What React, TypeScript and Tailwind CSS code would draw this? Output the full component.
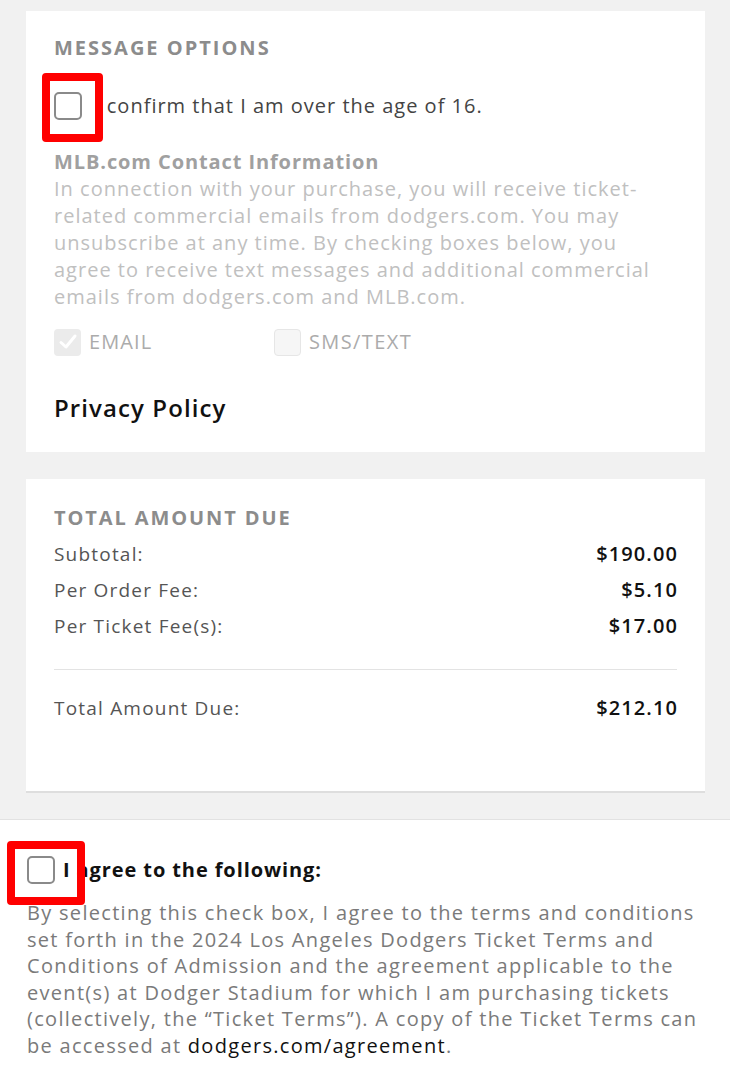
import React from "react";

const font = { fontFamily: "'Open Sans', 'Noto Sans', sans-serif" };

function Box() {
  return <div className="w-[28px] h-[28px] rounded-[5px] border-2 border-[#8a8a8a] bg-white" />;
}

export default function App() {
  return (
    <div className="w-[730px] min-h-[1076px] bg-[#f1f1f1] font-['Open_Sans',sans-serif]" style={font}>
      <div className="pt-[11px]">
        {/* Card 1 */}
        <div className="ml-[26px] w-[679px] bg-white px-[28px] pt-[25px] pb-[29px]">
          <div className="text-[20px] leading-[24px] font-bold text-[#8c8c8c] tracking-[2px]">MESSAGE OPTIONS</div>
          <div className="mt-[28px] h-[36px] flex items-center">
            <div className="relative">
              <Box />
              <div className="absolute left-[-12px] top-[-19px] w-[61px] h-[69px] border-[8px] border-[#ff0000] rounded-[4px]" />
            </div>
            <div className="ml-[12px] text-[20px] text-[#444] leading-[24px] tracking-[1px]">I confirm that I am over the age of 16.</div>
          </div>
          <div className="mt-[24px] text-[20px] leading-[27px] font-bold text-[#a0a0a0] tracking-[0.9px]">MLB.com Contact Information</div>
          <div className="text-[20px] leading-[27px] text-[#c0c0c0] tracking-[1px] whitespace-nowrap">
            In connection with your purchase, you will receive ticket-<br />
            related commercial emails from dodgers.com. You may<br />
            unsubscribe at any time. By checking boxes below, you<br />
            agree to receive text messages and additional commercial<br />
            emails from dodgers.com and MLB.com.
          </div>
          <div className="mt-[18px] flex items-center h-[28px]">
            <div className="flex items-center w-[220px]">
              <div className="w-[27px] h-[27px] rounded-[4px] bg-[#ebebeb] flex items-center justify-center">
                <svg width="20" height="20" viewBox="0 0 20 20">
                  <path d="M3 10.5 L8 15 L17 4" fill="none" stroke="#ffffff" strokeWidth="3" strokeLinecap="round" strokeLinejoin="round" />
                </svg>
              </div>
              <span className="ml-[8px] text-[20px] text-[#ababab] leading-[24px] tracking-[1.1px]">EMAIL</span>
            </div>
            <div className="flex items-center">
              <div className="w-[27px] h-[27px] rounded-[4px] bg-[#f6f6f6] border border-[#e6e6e6]" />
              <span className="ml-[8px] text-[20px] text-[#ababab] leading-[24px] tracking-[1.4px]">SMS/TEXT</span>
            </div>
          </div>
          <div className="mt-[37px] text-[24px] leading-[30px] font-semibold text-[#111] tracking-[1.1px]">Privacy Policy</div>
        </div>

        {/* Card 2 */}
        <div className="mt-[27px] ml-[26px] w-[679px] bg-white px-[28px] pt-[27px] pb-[65px] shadow-[0_2px_0_#dedede]">
          <div className="text-[20px] leading-[24px] font-bold text-[#8c8c8c] tracking-[1.9px]">TOTAL AMOUNT DUE</div>
          <div className="mt-[6px]">
            {[
              ["Subtotal:", "$190.00"],
              ["Per Order Fee:", "$5.10"],
              ["Per Ticket Fee(s):", "$17.00"],
            ].map(([l, v]) => (
              <div key={l} className="h-[36px] flex items-center justify-between">
                <span className="text-[19px] text-[#555] tracking-[1.2px]">{l}</span>
                <span className="text-[20px] text-[#111] font-semibold tracking-[1.1px] mr-[-1px]">{v}</span>
              </div>
            ))}
          </div>
          <div className="mt-[25px] h-px bg-[#e3e3e3]" />
          <div className="mt-[20px] h-[36px] flex items-center justify-between">
            <span className="text-[19px] text-[#555] tracking-[1.2px]">Total Amount Due:</span>
            <span className="text-[20px] text-[#111] font-semibold tracking-[1.1px] mr-[-1px]">$212.10</span>
          </div>
        </div>

        {/* Bottom */}
        <div className="mt-[28px] border-t border-[#e2e2e2] bg-white px-[27px] pt-[36px] pb-[20px]">
          <div className="flex items-center h-[28px]">
            <div className="relative">
              <Box />
              <div className="absolute left-[-20px] top-[-15px] w-[78px] h-[64px] border-[8px] border-[#ff0000] rounded-[4px]" />
            </div>
            <div className="ml-[8px] text-[20px] leading-[24px] font-bold text-[#111] tracking-[0.9px]">I agree to the following:</div>
          </div>
          <div className="mt-[16px] text-[20px] leading-[26.6px] font-medium text-[#7a7a7a] tracking-[1.3px] whitespace-nowrap">
            By selecting this check box, I agree to the terms and conditions<br />
            set forth in the 2024 Los Angeles Dodgers Ticket Terms and<br />
            Conditions of Admission and the agreement applicable to the<br />
            event(s) at Dodger Stadium for which I am purchasing tickets<br />
            (collectively, the “Ticket Terms”). A copy of the Ticket Terms can<br />
            be accessed at <span className="text-[#111]">dodgers.com/agreement</span>.
          </div>
        </div>
      </div>
    </div>
  );
}
